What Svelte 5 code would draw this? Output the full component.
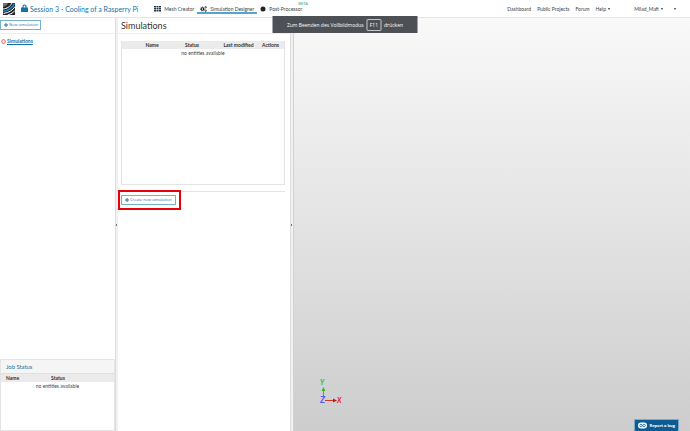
<script lang="ts">
  type Column = { label: string; cls: string };

  const projectTitle = "Session 3 - Cooling of a Rasperry Pi";
  const links: string[] = ["Dashboard", "Public Projects", "Forum"];
  const columns: Column[] = [
    { label: "Name", cls: "col-name" },
    { label: "Status", cls: "col-status" },
    { label: "Last modified", cls: "col-modified" },
    { label: "Actions", cls: "col-actions" },
  ];

  let activeTab: string = $state("designer");
</script>

<div class="app">
  <header class="topbar">
    <a class="logo" href="#home" aria-label="Home">
      <svg viewBox="0 0 24 24">
        <rect width="24" height="24" fill="#20242b" />
        <path d="M0 0H10L7 5L0 8Z" fill="#6d7379" />
        <path d="M0 12C8 11 14 8 18 0" fill="none" stroke="#fff" stroke-width="2" />
        <path d="M0 17C11 15 18 11 23 1" fill="none" stroke="#1d83bd" stroke-width="3" />
        <path d="M1 21C12 19 19 15 24 7" fill="none" stroke="#fff" stroke-width="2" />
        <path d="M9 24C16 22 21 19 24 15" fill="none" stroke="#fff" stroke-width="2" />
      </svg>
    </a>
    <svg class="lock" viewBox="0 0 14 16">
      <path d="M4 8V5a3 3 0 0 1 6 0v3" fill="none" stroke="#1673a8" stroke-width="2.4" />
      <rect y="7" width="14" height="9" rx="1" fill="#1673a8" />
    </svg>
    <h1>{projectTitle}</h1>

    <nav class="tabs">
      <button class="tab" class:tab--active={activeTab === "mesh"} onclick={() => (activeTab = "mesh")}>
        <svg class="tab-icon" viewBox="0 0 14 12">
          <path d="M0 0h4v3H0zM5 0h4v3H5zM10 0h4v3h-4zM0 4h4v3H0zM5 4h4v3H5zM10 4h4v3h-4zM0 8h4v3H0zM5 8h4v3H5zM10 8h4v3h-4z" fill="#20364a" />
        </svg>
        Mesh Creator
      </button>
      <button class="tab" class:tab--active={activeTab === "designer"} onclick={() => (activeTab = "designer")}>
        <svg class="tab-icon" viewBox="0 0 16 14">
          <g fill="none" stroke="#222">
            <circle cx="5.500" cy="7" r="3" stroke-width="2.6" />
            <circle cx="5.500" cy="7" r="4.800" stroke-width="1.500" stroke-dasharray="2 1.77" />
            <circle cx="13" cy="3" r="1.8" stroke-width="1.8" />
            <circle cx="13" cy="11" r="1.8" stroke-width="1.8" />
          </g>
        </svg>
        Simulation Designer
      </button>
      <button class="tab" class:tab--active={activeTab === "post"} onclick={() => (activeTab = "post")}>
        <svg class="tab-icon tab-icon--round" viewBox="0 0 12 12">
          <circle cx="6" cy="6" r="5" fill="#222" />
        </svg>
        Post-Processor
        <sup>BETA</sup>
      </button>
    </nav>

    <nav class="links">
      {#each links as link}
        <a href="#{link}">{link}</a>
      {/each}
      <button class="menu">Help <i class="caret"></i></button>
      <button class="menu menu--user">Milad_Mafi <i class="caret"></i></button>
      <button class="menu menu--more" aria-label="More"><i class="caret"></i></button>
    </nav>
  </header>

  <div class="toast" role="status">
    Zum Beenden des Vollbildmodus <kbd>F11</kbd> drücken
  </div>

  <main class="workspace">
    <aside class="sidebar">
      <div class="toolbar">
        <button class="btn">
          <svg class="plus" viewBox="0 0 8 8"><path d="M4 0v8M0 4h8" stroke="#1673a8" stroke-width="2" /></svg>
          New simulation
        </button>
      </div>
      <div class="tree">
        <svg class="ring" viewBox="0 0 10 10"><circle cx="5" cy="5" r="3.8" fill="none" stroke="#e8694f" stroke-width="2" /></svg>
        <a href="#simulations">Simulations</a>
      </div>
      <section class="jobs">
        <h3>Job Status</h3>
        <table>
          <thead>
            <tr><th class="job-name">Name</th><th>Status</th></tr>
          </thead>
          <tbody>
            <tr><td colspan="2">no entities available</td></tr>
          </tbody>
        </table>
      </section>
    </aside>

    <div class="splitter"><span class="grip"></span></div>

    <section class="panel">
      <h2>Simulations</h2>
      <div class="grid">
        <table>
          <thead>
            <tr>
              {#each columns as column}
                <th class={column.cls}>{column.label}</th>
              {/each}
            </tr>
          </thead>
          <tbody>
            <tr><td colspan="4">no entities available</td></tr>
          </tbody>
        </table>
      </div>
      <div class="actions">
        <div class="highlight">
          <button class="btn btn--create">
            <svg class="plus" viewBox="0 0 8 8"><path d="M4 0v8M0 4h8" stroke="#1673a8" stroke-width="2" /></svg>
            Create new simulation
          </button>
        </div>
      </div>
    </section>

    <div class="splitter"><span class="grip"></span></div>

    <section class="viewer">
      <svg class="axes" viewBox="0 0 24 27">
        <path d="M4.500 19V10" stroke="#2ebd2e" stroke-width="1" />
        <path d="M4.500 8L6.500 12H2.500Z" fill="#2ebd2e" />
        <path d="M6 21.500H16" stroke="#d93030" stroke-width="1" />
        <path d="M18 21.500L14 19.500V23.500Z" fill="#b02020" />
        <text x="1" y="6" fill="#2ebd2e">Y</text>
        <text x="18" y="24" fill="#e01c1c">X</text>
        <text class="axis-z" x="1" y="24" fill="#5a5af0">Z</text>
      </svg>
      <button class="bug">
        <svg viewBox="0 0 18 14">
          <rect x="0" y="1" width="18" height="12" rx="6" fill="#fff" />
          <circle cx="6" cy="7" r="2.500" fill="none" stroke="#0c5d96" stroke-width="1.500" />
          <circle cx="12" cy="7" r="2.500" fill="none" stroke="#0c5d96" stroke-width="1.500" />
        </svg>
        Report a bug
      </button>
    </section>
  </main>
</div>

<style>
  :global(body) {
    margin: 0;
  }

  .app {
    --blue: #1673a8;
    --line: #e4e4e4;

    position: relative;
    display: flex;
    flex-direction: column;
    min-height: 100vh;
    background: #fff;
    color: #444;
    font-family: Lato, "Liberation Sans", sans-serif;
    font-size: 5px;
    line-height: 8px;
  }

  .app * {
    box-sizing: border-box;
  }

  h1,
  h2,
  h3 {
    margin: 0;
    font-weight: 400;
  }

  button {
    padding: 0;
    border: 0;
    background: none;
    color: inherit;
    font: inherit;
    white-space: nowrap;
    cursor: pointer;
  }

  a {
    color: inherit;
    text-decoration: none;
  }

  /* Top bar */
  .topbar {
    display: flex;
    align-items: center;
    height: 18px;
    padding-left: 3px;
    border-bottom: 1px solid var(--line);
  }

  .logo,
  .logo svg {
    display: block;
    width: 12px;
    height: 12px;
  }

  .lock {
    width: 7px;
    height: 8px;
    margin: 0 2px 1px 6px;
  }

  h1 {
    color: var(--blue);
    font-size: 7px;
    white-space: nowrap;
  }

  .tabs {
    display: flex;
    align-self: flex-start;
    margin-left: 13px;
  }

  .tab {
    display: flex;
    align-items: center;
    height: 14px;
    padding: 4px 3px 0;
    box-shadow: none;
  }

  .tab--active {
    box-shadow: inset 0 -2px 0 #55a3cf;
  }

  .tab-icon {
    width: 7px;
    height: 6px;
    margin-right: 3px;
  }

  .tab-icon--round {
    width: 6px;
  }

  .tab sup {
    align-self: flex-start;
    margin: -2px 0 0 -4px;
    color: #35a35a;
    font-size: 4px;
    line-height: 4px;
  }

  .links {
    display: flex;
    gap: 6px;
    margin-left: auto;
    padding-right: 14px;
    white-space: nowrap;
  }

  .menu--user {
    margin-left: 18px;
  }

  .menu--more {
    margin-left: 4px;
  }

  .caret {
    display: inline-block;
    margin-left: 1px;
    border: 1px solid transparent;
    border-top: 2px solid #333;
    border-bottom: 0;
    vertical-align: 1px;
  }

  /* Fullscreen notice */
  .toast {
    position: absolute;
    top: 16px;
    left: 50%;
    z-index: 2;
    display: flex;
    align-items: center;
    justify-content: center;
    gap: 3px;
    width: 145px;
    height: 17px;
    background: #4d5156;
    color: #fff;
    font-family: "Open Sans", sans-serif;
    white-space: nowrap;
    transform: translateX(-50%);
  }

  kbd {
    padding: 1px 2px;
    border: 1px solid #c4c6c8;
    border-radius: 1px;
    font: inherit;
  }

  /* Layout */
  .workspace {
    display: flex;
    flex: 1;
  }

  .sidebar {
    display: flex;
    flex: 0 0 115px;
    flex-direction: column;
  }

  .toolbar {
    padding: 2px 0 3px;
    border-bottom: 1px solid #eee;
  }

  .btn {
    display: flex;
    align-items: center;
    gap: 1px;
    height: 10px;
    padding: 0 2px 0 3px;
    border: 1px solid #74b0cf;
    color: var(--blue);
    font-family: "Open Sans", sans-serif;
    font-size: 4px;
    line-height: 8px;
  }

  .btn--create {
    padding: 0 3px;
  }

  .plus {
    width: 4px;
    height: 4px;
  }

  .tree {
    display: flex;
    align-items: center;
    gap: 1px;
    padding: 3px 1px;
    color: var(--blue);
    font-weight: 700;
  }

  .tree a {
    text-decoration: underline;
  }

  .ring {
    width: 5px;
    height: 5px;
  }

  .splitter {
    display: flex;
    flex: 0 0 3px;
    align-items: center;
    border-left: 1px solid #ddd;
    background: #f1f1f1;
  }

  .grip {
    width: 1px;
    height: 2px;
    background: #777;
  }

  /* Tables */
  table {
    width: 100%;
    border-collapse: collapse;
    table-layout: fixed;
  }

  th,
  td {
    height: 8px;
    padding: 0;
    text-align: center;
    line-height: 8px;
  }

  th {
    background: #ebebeb;
    color: #333;
    font-weight: 700;
  }

  .jobs {
    height: 72px;
    margin-top: auto;
    border: 1px solid var(--line);
  }

  .jobs h3 {
    padding: 3px 5px 2px;
    border-bottom: 1px solid #e0e0e0;
    background: #f5f5f5;
    color: var(--blue);
  }

  .jobs th {
    text-align: left;
  }

  .job-name {
    width: 50px;
    padding-left: 5px;
  }

  .panel {
    flex: 0 0 172px;
  }

  h2 {
    margin-bottom: 7px;
    padding: 2px 3px;
    border-bottom: 1px solid #eee;
    color: #333;
    font-size: 9px;
    line-height: 11px;
  }

  .grid {
    height: 144px;
    margin: 0 5px 0 3px;
    border: 1px solid var(--line);
    border-top: 0;
  }

  .col-name {
    width: 60px;
  }

  .col-status {
    width: 20px;
  }

  .col-modified {
    padding-left: 18px;
  }

  .col-actions {
    width: 27px;
  }

  .actions {
    margin: 6px 5px 0 3px;
    border-top: 1px solid var(--line);
  }

  .highlight {
    width: fit-content;
    margin: -2px 0 0 -3px;
    padding: 3px 3px 3px 1px;
    border: 2px solid #e8000d;
    background: #fff;
  }

  /* 3D view */
  .viewer {
    position: relative;
    flex: 1;
    border-left: 1px solid #d2d2d2;
    background: linear-gradient(#f9f9f9, #cdcdcd);
  }

  .axes {
    position: absolute;
    bottom: 25px;
    left: 25px;
    width: 24px;
    height: 27px;
    overflow: visible;
    font-size: 7px;
    font-style: italic;
    font-weight: 700;
  }

  .axis-z {
    font-size: 9px;
  }

  .bug {
    position: absolute;
    right: 11px;
    bottom: 0;
    display: flex;
    align-items: center;
    gap: 3px;
    height: 12px;
    padding: 0 3px;
    border: 1px solid #7fa9c6;
    border-bottom: 0;
    background: #0c5d96;
    color: #fff;
    font-family: "Open Sans", sans-serif;
    font-size: 4px;
    font-weight: 700;
  }

  .bug svg {
    width: 9px;
    height: 7px;
  }
</style>
